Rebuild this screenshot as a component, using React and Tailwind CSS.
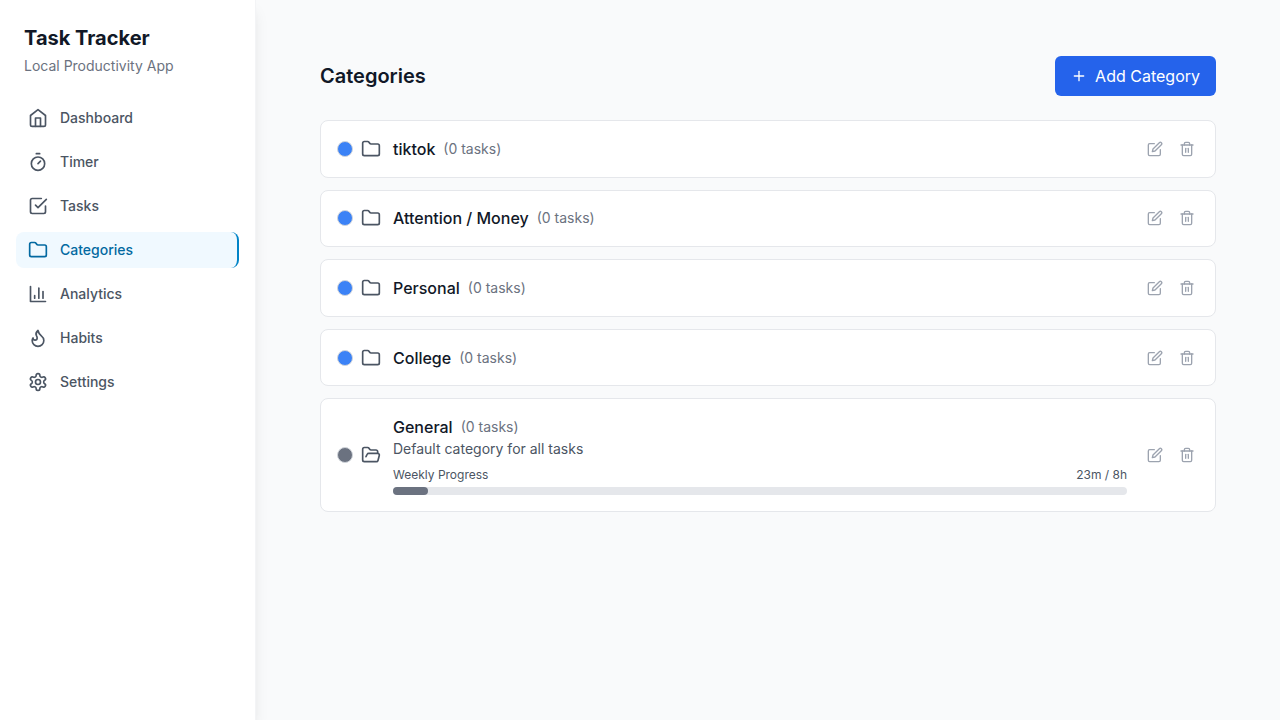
const iconShapes = {
  home: ['m3 9 9-7 9 7v11a2 2 0 0 1-2 2H5a2 2 0 0 1-2-2z', 'M9 22V12h6v10'],
  timer: ['M10 2h4', 'm12 14 3-3', 'M12 6a8 8 0 1 0 0 16 8 8 0 0 0 0-16z'],
  tasks: ['m9 11 3 3L22 4', 'M21 12v7a2 2 0 0 1-2 2H5a2 2 0 0 1-2-2V5a2 2 0 0 1 2-2h11'],
  folder: [
    'M4 20h16a2 2 0 0 0 2-2V8a2 2 0 0 0-2-2h-7.93a2 2 0 0 1-1.66-.9l-.82-1.2A2 2 0 0 0 7.93 3H4a2 2 0 0 0-2 2v13c0 1.1.9 2 2 2Z',
  ],
  folderOpen: [
    'm6 14 1.45-2.9A2 2 0 0 1 9.24 10H20a2 2 0 0 1 1.94 2.5l-1.55 6a2 2 0 0 1-1.94 1.5H4a2 2 0 0 1-2-2V5c0-1.1.9-2 2-2h3.93a2 2 0 0 1 1.66.9l.82 1.2a2 2 0 0 0 1.66.9H18a2 2 0 0 1 2 2v2',
  ],
  chart: ['M3 3v18h18', 'M18 17V9', 'M13 17V5', 'M8 17v-3'],
  flame: [
    'M8.5 14.5A2.5 2.5 0 0 0 11 12c0-1.38-.5-2-1-3-1.072-2.143-.224-4.054 2-6 .5 2.5 2 4.9 4 6.5 2 1.6 3 3.5 3 5.5a7 7 0 1 1-14 0c0-1.153.433-2.294 1-3a2.5 2.5 0 0 0 2.5 2.5z',
  ],
  settings: [
    'M12.22 2h-.44a2 2 0 0 0-2 2v.18a2 2 0 0 1-1 1.73l-.43.25a2 2 0 0 1-2 0l-.15-.08a2 2 0 0 0-2.73.73l-.22.38a2 2 0 0 0 .73 2.73l.15.1a2 2 0 0 1 1 1.72v.51a2 2 0 0 1-1 1.74l-.15.09a2 2 0 0 0-.73 2.73l.22.38a2 2 0 0 0 2.73.73l.15-.08a2 2 0 0 1 2 0l.43.25a2 2 0 0 1 1 1.73V20a2 2 0 0 0 2 2h.44a2 2 0 0 0 2-2v-.18a2 2 0 0 1 1-1.73l.43-.25a2 2 0 0 1 2 0l.15.08a2 2 0 0 0 2.73-.73l.22-.39a2 2 0 0 0-.73-2.73l-.15-.08a2 2 0 0 1-1-1.74v-.5a2 2 0 0 1 1-1.74l.15-.09a2 2 0 0 0 .73-2.73l-.22-.38a2 2 0 0 0-2.73-.73l-.15.08a2 2 0 0 1-2 0l-.43-.25a2 2 0 0 1-1-1.73V4a2 2 0 0 0-2-2z',
    'M12 9a3 3 0 1 0 0 6 3 3 0 0 0 0-6z',
  ],
  plus: ['M5 12h14', 'M12 5v14'],
  edit: [
    'M11 4H4a2 2 0 0 0-2 2v14a2 2 0 0 0 2 2h14a2 2 0 0 0 2-2v-7',
    'M18.5 2.5a2.12 2.12 0 0 1 3 3L12 15l-4 1 1-4Z',
  ],
  trash: ['M3 6h18', 'M19 6v14c0 1-1 2-2 2H7c-1 0-2-1-2-2V6', 'M8 6V4c0-1 1-2 2-2h4c1 0 2 1 2 2v2', 'M10 11v6', 'M14 11v6'],
}

function Icon({ name, className }) {
  return (
    <svg
      viewBox="0 0 24 24"
      fill="none"
      stroke="currentColor"
      strokeWidth="2"
      strokeLinecap="round"
      strokeLinejoin="round"
      className={className}
    >
      {iconShapes[name].map((d) => (
        <path key={d} d={d} />
      ))}
    </svg>
  )
}

const navItems = [
  { label: 'Dashboard', icon: 'home' },
  { label: 'Timer', icon: 'timer' },
  { label: 'Tasks', icon: 'tasks' },
  { label: 'Categories', icon: 'folder', active: true },
  { label: 'Analytics', icon: 'chart' },
  { label: 'Habits', icon: 'flame' },
  { label: 'Settings', icon: 'settings' },
]

const categories = [
  { name: 'tiktok' },
  { name: 'Attention / Money' },
  { name: 'Personal' },
  { name: 'College' },
  {
    name: 'General',
    general: true,
    description: 'Default category for all tasks',
    progress: { label: '23m / 8h', percent: 4.79 },
  },
]

function Sidebar() {
  return (
    <aside className="relative flex w-64 shrink-0 flex-col border-r border-[#f3f4f6] bg-white shadow-lg">
      <div className="px-6 pt-6">
        <h1 className="text-xl font-bold text-[#111827]">Task Tracker</h1>
        <p className="mt-1 text-sm text-[#6b7280]">Local Productivity App</p>
      </div>
      <nav className="mt-6 flex flex-col gap-2 px-4">
        {navItems.map(({ label, icon, active }) => (
          <a
            key={label}
            className={`flex h-9 items-center rounded-lg px-3 text-sm font-medium ${
              active ? 'border-r-2 border-[#0284c7] bg-[#f0f9ff] text-[#0369a1]' : 'text-[#4b5563]'
            }`}
          >
            <Icon name={icon} className="mr-3 size-5" />
            {label}
          </a>
        ))}
      </nav>
    </aside>
  )
}

function CategoryCard({ name, general, description, progress }) {
  return (
    <div
      className={`flex items-center rounded-lg border border-[#e5e7eb] bg-white pr-3 pl-4 ${
        general ? 'h-[113.6px]' : 'h-[57.6px]'
      }`}
    >
      <span className={`size-4 rounded-full border border-[#d1d5db] ${general ? 'bg-[#6b7280]' : 'bg-[#3b82f6]'}`} />
      <Icon name={general ? 'folderOpen' : 'folder'} className="ml-2 size-5 text-[#4b5563]" />
      <div className="ml-3 flex-1">
        <div className="flex h-6 items-center gap-2">
          <h3 className="text-base font-medium text-[#111827]">{name}</h3>
          <span className="text-sm text-[#6b7280]">(0 tasks)</span>
        </div>
        {description && <p className="text-sm text-[#4b5563]">{description}</p>}
        {progress && (
          <div className="mt-2">
            <div className="mb-1 flex justify-between text-xs text-[#4b5563]">
              <span>Weekly Progress</span>
              <span>{progress.label}</span>
            </div>
            <div className="h-2 rounded-full bg-[#e5e7eb]">
              <div className="h-2 rounded-full bg-[#6b7280]" style={{ width: `${progress.percent}%` }} />
            </div>
          </div>
        )}
      </div>
      <div className="ml-3 flex text-[#9ca3af]">
        <button className="p-2">
          <Icon name="edit" className="size-4" />
        </button>
        <button className="p-2">
          <Icon name="trash" className="size-4" />
        </button>
      </div>
    </div>
  )
}

export default function App() {
  return (
    <div className="flex h-screen bg-[#f9fafb] font-['Inter',sans-serif]">
      <Sidebar />
      <main className="flex-1 px-16 pt-14">
        <div className="mb-6 flex items-center justify-between">
          <h2 className="text-xl font-semibold text-[#111827]">Categories</h2>
          <button className="flex h-10 items-center gap-2 rounded-md bg-[#2563eb] px-4 text-base text-white">
            <Icon name="plus" className="size-4" />
            Add Category
          </button>
        </div>
        <div className="flex flex-col gap-3">
          {categories.map((category) => (
            <CategoryCard key={category.name} {...category} />
          ))}
        </div>
      </main>
    </div>
  )
}
